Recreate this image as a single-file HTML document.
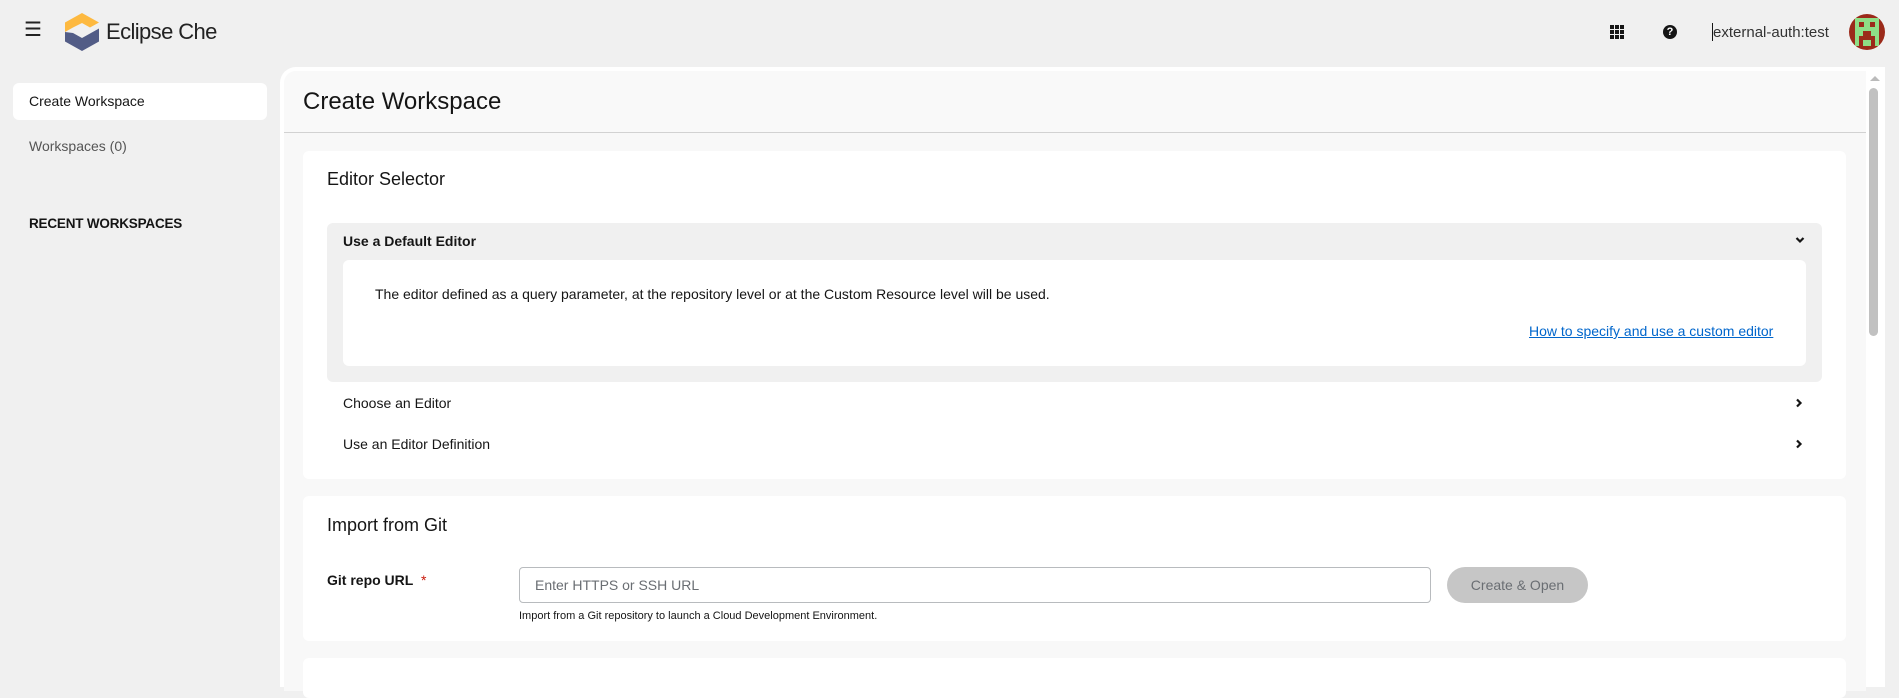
<!DOCTYPE html>
<html><head><meta charset="utf-8"><style>
*{box-sizing:border-box;margin:0;padding:0}
body{width:1899px;height:677px;overflow:hidden;background:#f0f0f0;font-family:"Liberation Sans",sans-serif;color:#151515;position:relative}
.a{position:absolute}
.t{position:absolute;white-space:nowrap;line-height:1}
</style></head><body>
<!-- header -->
<div class="t" style="left:24px;top:20px;font-size:20px;color:#222">☰</div>
<svg class="a" style="left:65px;top:13px" width="34" height="38" viewBox="0 0 34 38">
<polygon points="17,0 34,9.5 25,14.5 17,10 8,14.5 8,14.5 0,19 0,9.5" fill="#fdb940"/>
<polygon points="0,19 0,28.5 17,38 34,28.5 34,15.5 17,25 8,20" fill="#525c86"/>
</svg>
<div class="t" style="left:106px;top:21px;font-size:22px;color:#222;letter-spacing:-0.6px">Eclipse Che</div>
<svg class="a" style="left:1610px;top:25px" width="14" height="14" viewBox="0 0 14 14" fill="#151515">
<rect x="0" y="0" width="4" height="4"/><rect x="5" y="0" width="4" height="4"/><rect x="10" y="0" width="4" height="4"/>
<rect x="0" y="5" width="4" height="4"/><rect x="5" y="5" width="4" height="4"/><rect x="10" y="5" width="4" height="4"/>
<rect x="0" y="10" width="4" height="4"/><rect x="5" y="10" width="4" height="4"/><rect x="10" y="10" width="4" height="4"/>
</svg>
<div class="a" style="left:1663px;top:25px;width:14px;height:14px;border-radius:50%;background:#151515;color:#fff;font-size:11px;font-weight:bold;text-align:center;line-height:14px">?</div>
<div class="a" style="left:1712px;top:23px;width:1px;height:18px;background:#151515"></div>
<div class="t" style="left:1713px;top:25px;font-size:15px;color:#333">external-auth:test</div>
<svg class="a" style="left:1849px;top:14px" width="36" height="36" viewBox="0 0 36 36">
<clipPath id="c"><circle cx="18" cy="18" r="18"/></clipPath>
<g clip-path="url(#c)"><rect width="36" height="36" fill="#9b2a1a"/>
<rect x="6" y="4" width="24" height="28" fill="#8ede86"/>
<rect x="10" y="8" width="5" height="5" fill="#9b2a1a"/><rect x="21" y="8" width="5" height="5" fill="#9b2a1a"/>
<rect x="14" y="17" width="8" height="5" fill="#9b2a1a"/><rect x="10" y="22" width="16" height="4" fill="#9b2a1a"/>
<rect x="10" y="26" width="4" height="8" fill="#9b2a1a"/><rect x="22" y="26" width="4" height="8" fill="#9b2a1a"/></g>
</svg>
<!-- sidebar -->
<div class="a" style="left:13px;top:83px;width:254px;height:37px;background:#fff;border-radius:6px"></div>
<div class="t" style="left:29px;top:94px;font-size:14px">Create Workspace</div>
<div class="t" style="left:29px;top:139px;font-size:14px;color:#555">Workspaces (0)</div>
<div class="t" style="left:29px;top:217px;font-size:13.5px;font-weight:bold;letter-spacing:-0.2px">RECENT WORKSPACES</div>
<!-- main panel -->
<div class="a" style="left:280px;top:67px;width:1605px;height:620px;background:#fff;border-radius:16px 16px 0 0"></div>
<div class="a" style="left:284px;top:71px;width:1582px;height:620px;background:#f8f8f8;border-radius:12px 0 0 0"></div>
<div class="a" style="left:284px;top:71px;width:1582px;height:62px;background:#f9f9f9;border-bottom:1px solid #d2d2d2;border-radius:12px 0 0 0"></div>
<div class="t" style="left:303px;top:90px;font-size:24px">Create Workspace</div>
<!-- scrollbar -->
<div class="a" style="left:1866px;top:67px;width:19px;height:620px;background:#fff"></div>
<div class="a" style="left:1870px;top:76px;width:0;height:0;border-left:5px solid transparent;border-right:5px solid transparent;border-bottom:5px solid #bbb"></div>
<div class="a" style="left:1869px;top:88px;width:9px;height:248px;background:#c1c1c1;border-radius:5px"></div>
<!-- card 1 -->
<div class="a" style="left:303px;top:151px;width:1543px;height:328px;background:#fff;border-radius:6px"></div>
<div class="t" style="left:327px;top:170px;font-size:18px">Editor Selector</div>
<div class="a" style="left:327px;top:223px;width:1495px;height:159px;background:#f0f0f0;border-radius:6px"></div>
<div class="t" style="left:343px;top:234px;font-size:14px;font-weight:bold">Use a Default Editor</div>
<svg class="a" style="left:1795px;top:236px" width="10" height="8" viewBox="0 0 10 8"><path d="M1.5 2 L5 5.5 L8.5 2" stroke="#151515" stroke-width="2.2" fill="none"/></svg>
<div class="a" style="left:343px;top:260px;width:1463px;height:106px;background:#fff;border-radius:6px"></div>
<div class="t" style="left:375px;top:287px;font-size:14px">The editor defined as a query parameter, at the repository level or at the Custom Resource level will be used.</div>
<div class="t" style="left:1529px;top:324px;font-size:14px;color:#0066cc;text-decoration:underline">How to specify and use a custom editor</div>
<div class="t" style="left:343px;top:396px;font-size:14px">Choose an Editor</div>
<svg class="a" style="left:1795px;top:398px" width="8" height="10" viewBox="0 0 8 10"><path d="M2 1.5 L5.5 5 L2 8.5" stroke="#151515" stroke-width="2.2" fill="none"/></svg>
<div class="t" style="left:343px;top:437px;font-size:14px">Use an Editor Definition</div>
<svg class="a" style="left:1795px;top:439px" width="8" height="10" viewBox="0 0 8 10"><path d="M2 1.5 L5.5 5 L2 8.5" stroke="#151515" stroke-width="2.2" fill="none"/></svg>
<!-- card 2 -->
<div class="a" style="left:303px;top:496px;width:1543px;height:145px;background:#fff;border-radius:6px"></div>
<div class="t" style="left:327px;top:516px;font-size:18px">Import from Git</div>
<div class="t" style="left:327px;top:573px;font-size:14px;font-weight:bold">Git repo URL <span style="color:#c9190b;font-weight:normal;margin-left:4px">*</span></div>
<div class="a" style="left:519px;top:567px;width:912px;height:36px;border:1px solid #b8bbbe;border-radius:4px;background:#fff"></div>
<div class="t" style="left:535px;top:578px;font-size:14px;color:#6a6e73">Enter HTTPS or SSH URL</div>
<div class="t" style="left:519px;top:611px;font-size:11px;color:#151515">Import from a Git repository to launch a Cloud Development Environment.</div>
<div class="a" style="left:1447px;top:567px;width:141px;height:36px;background:#c6c6c6;border-radius:18px;color:#6a6e73;font-size:14px;text-align:center;line-height:36px">Create &amp; Open</div>
<!-- card 3 -->
<div class="a" style="left:303px;top:658px;width:1543px;height:40px;background:#fff;border-radius:6px"></div>
</body></html>
